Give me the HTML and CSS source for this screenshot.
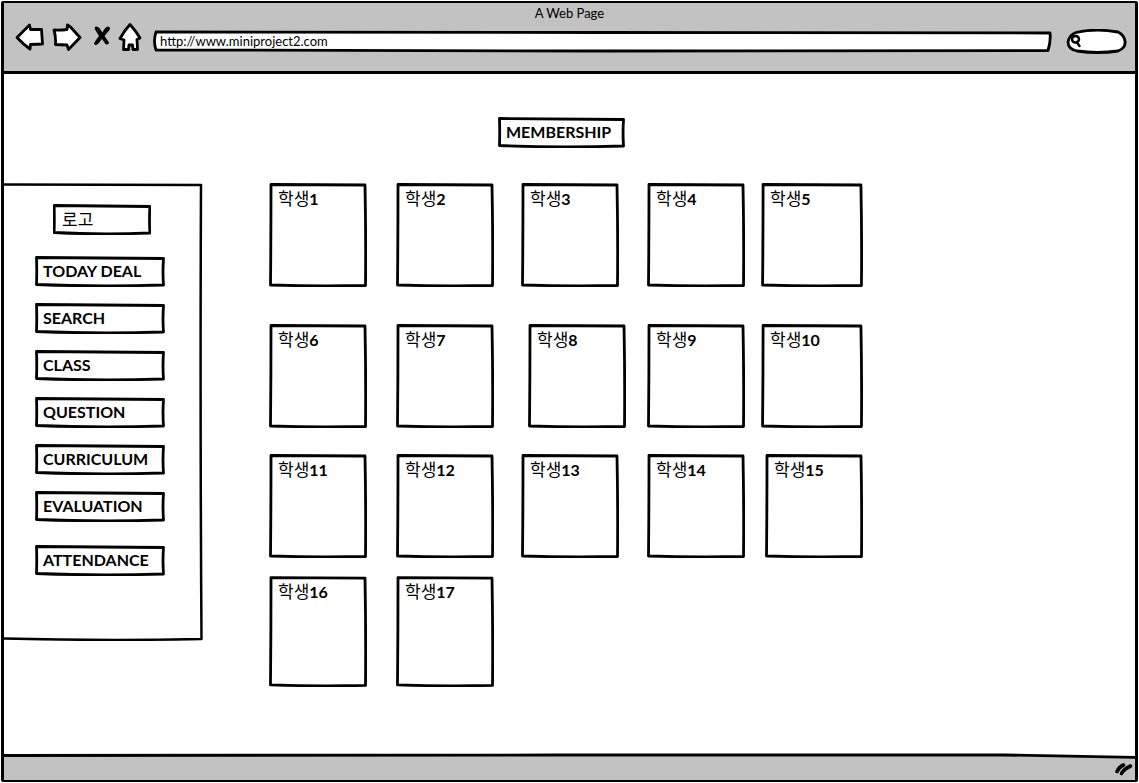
FILE: index.html
```html
<!DOCTYPE html>
<html lang="ko">
<head>
<meta charset="utf-8">
<meta name="viewport" content="width=device-width, initial-scale=1">
<title>A Web Page</title>
<link rel="stylesheet" href="styles.css">
</head>
<body>
<div class="window">
  <header class="chrome">
    <div class="window-title">A Web Page</div>
    <form class="toolbar">
      <button class="tool back" type="button" aria-label="Back">
        <svg width="30" height="28" viewBox="0 0 30 28"><path class="shape" d="M2 14.500L14.500 2l1 4.500L26.500 6.500q.5 7 1 14.500l-12 .5-.5 4.500Q8 21 2 14.500Z"/></svg>
      </button>
      <button class="tool forward" type="button" aria-label="Forward">
        <svg width="30" height="28" viewBox="0 0 30 28"><path class="shape" d="M2 7q6 .5 13-.5l.5-4.500 3 2L28 14.500 16.500 26.500 15 22 3.500 21.500q.5-8-1.500-14.500Z"/></svg>
      </button>
      <button class="tool stop" type="button" aria-label="Stop">
        <svg width="18" height="28" viewBox="0 0 18 28"><path class="cross" d="M2 6.500Q1 3.500 3.500 3.500 6 3.500 9.500 9.500 12 4 15 3.500 18 4 16.500 7L11.500 13 16 19.500Q15.500 22.500 12.500 21L9 16 5 21Q1.500 23 1 20.500 3 16.500 6 13Z"/></svg>
      </button>
      <button class="tool home" type="button" aria-label="Home">
        <svg width="24" height="28" viewBox="0 0 24 28"><path class="shape" d="M12 1.500Q18 8 22 15l-3 1.500.5 10H15l-.5-4.500h-3.500l-.5 4.500H5.500L6 17l-4-1.500Q6 8 12 1.500Z"/></svg>
      </button>
      <input class="address" type="text" aria-label="Address" value="http://www.miniproject2.com">
      <label class="search">
        <svg width="14" height="14" viewBox="0 0 14 14" aria-hidden="true"><path class="lens" d="M2 5Q2.500 2 5.500 2 9 2 9 5.500 8.500 8.500 5 8.500 2 8 2 5ZM7 8.500L9.500 12"/></svg>
        <input class="search-input" type="text" aria-label="Search">
      </label>
    </form>
  </header>

  <main class="page">
    <nav class="sidebar" aria-label="Menu">
      <a class="box logo hangul" href="#">로고</a>
      <a class="box item" href="#">TODAY DEAL</a>
      <a class="box item" href="#">SEARCH</a>
      <a class="box item" href="#">CLASS</a>
      <a class="box item" href="#">QUESTION</a>
      <a class="box item" href="#">CURRICULUM</a>
      <a class="box item" href="#">EVALUATION</a>
      <a class="box item last" href="#">ATTENDANCE</a>
    </nav>
    <section class="content">
      <h1 class="box heading">MEMBERSHIP</h1>
      <ul class="cards">
        <li class="card"><span class="hangul">학생</span>1</li>
        <li class="card"><span class="hangul">학생</span>2</li>
        <li class="card"><span class="hangul">학생</span>3</li>
        <li class="card"><span class="hangul">학생</span>4</li>
        <li class="card wide"><span class="hangul">학생</span>5</li>
        <li class="card"><span class="hangul">학생</span>6</li>
        <li class="card"><span class="hangul">학생</span>7</li>
        <li class="card shifted"><span class="hangul">학생</span>8</li>
        <li class="card"><span class="hangul">학생</span>9</li>
        <li class="card wide"><span class="hangul">학생</span>10</li>
        <li class="card"><span class="hangul">학생</span>11</li>
        <li class="card"><span class="hangul">학생</span>12</li>
        <li class="card"><span class="hangul">학생</span>13</li>
        <li class="card"><span class="hangul">학생</span>14</li>
        <li class="card end"><span class="hangul">학생</span>15</li>
        <li class="card tall"><span class="hangul">학생</span>16</li>
        <li class="card tall"><span class="hangul">학생</span>17</li>
      </ul>
    </section>
  </main>

  <footer class="statusbar">
    <svg width="20" height="16" viewBox="0 0 20 16" aria-hidden="true"><path class="grip" d="M3 10.500Q5 6 9.500 4M7.500 12.500Q10 8 16.500 5"/></svg>
  </footer>
</div>
</body>
</html>
```
FILE: styles.css
```css
* {
  box-sizing: border-box;
}

body {
  margin: 0;
  background: #fff;
  color: #000;
  font-family: Lato, "Noto Sans CJK KR", sans-serif;
  font-size: 16px;
  font-weight: 700;
}

.window {
  display: flex;
  flex-direction: column;
  min-height: calc(100vh - 2px);
  margin: 1px;
  border: solid #000;
  border-width: 2px 3px;
  border-radius: 2px;
}

/* Browser bar */
.chrome {
  height: 71px;
  background: #c2c2c2;
  border-bottom: 3px solid #000;
}

.window-title {
  font-size: 13px;
  font-weight: 400;
  line-height: 20px;
  text-align: center;
}

.toolbar {
  display: flex;
  align-items: center;
  height: 28px;
  padding: 0 8px 0 11px;
}

.tool {
  flex: none;
  padding: 0;
  border: 0;
  background: none;
  line-height: 0;
}

.forward {
  margin-left: 7px;
}

.stop {
  margin-left: 11px;
}

.home {
  margin-left: 7px;
}

.shape {
  fill: #fff;
  stroke: #000;
  stroke-width: 2.8;
  stroke-linejoin: round;
}

.cross {
  fill: #000;
}

.grip {
  fill: none;
  stroke: #000;
  stroke-width: 3.6;
  stroke-linecap: round;
}

.lens {
  fill: none;
  stroke: #000;
  stroke-width: 2.4;
  stroke-linecap: round;
}

.address {
  flex: 1;
  min-width: 0;
  height: 23px;
  margin: 8px 14px 0 11px;
  padding: 0 7px;
  border: 0;
  background: url("data:image/svg+xml,%3Csvg xmlns='http://www.w3.org/2000/svg' viewBox='0 0 898 23' preserveAspectRatio='none'%3E%3Cpath d='M3 2L450 2.500 896 3Q897 11 894 20.500L450 21 3 20Q0 11 3 2Z' fill='%23fff' stroke='%23000' stroke-width='2.800' stroke-linejoin='round' vector-effect='non-scaling-stroke'/%3E%3C/svg%3E") 0 0 / 100% 100% no-repeat;
  color: #000;
  font: 400 13px Lato, sans-serif;
}

.search {
  display: flex;
  align-items: center;
  width: 61px;
  height: 25px;
  margin-top: 8px;
  padding: 0 4px;
  background: url("data:image/svg+xml,%3Csvg xmlns='http://www.w3.org/2000/svg' viewBox='0 0 61 25' preserveAspectRatio='none'%3E%3Cpath d='M10 3.500Q30 -1 52 3 58 6 59 12 60 19 52 22 32 25 11 22 2 20 2 13 3 6 10 3.500Z' fill='%23fff' stroke='%23000' stroke-width='2.800' vector-effect='non-scaling-stroke'/%3E%3C/svg%3E") 0 0 / 100% 100% no-repeat;
}

.search svg {
  flex: none;
}

.search-input {
  width: 100%;
  min-width: 0;
  padding: 0;
  border: 0;
  outline: 0;
  background: none;
}

/* Page */
.page {
  display: flex;
  flex: 1;
  align-items: flex-start;
}

.box {
  display: block;
  height: 31px;
  margin: 0;
  padding: 0 8px;
  background: url("data:image/svg+xml,%3Csvg xmlns='http://www.w3.org/2000/svg' viewBox='0 0 130 31' preserveAspectRatio='none'%3E%3Cpath d='M1.500 1.500Q66 2 128.500 2.500Q127.500 16 128.500 29Q64 31 1.500 28.500Q2 15 1.500 1.500Z' fill='%23fff' stroke='%23000' stroke-width='2.800' stroke-linejoin='round' vector-effect='non-scaling-stroke'/%3E%3C/svg%3E") 0 0 / 100% 100% no-repeat;
  color: #000;
  font-size: 16px;
  line-height: 30px;
  text-decoration: none;
  white-space: nowrap;
}

.hangul {
  font-family: "Noto Sans CJK KR", sans-serif;
  font-size: 17px;
  font-weight: 400;
}

.sidebar {
  display: flex;
  flex: none;
  flex-direction: column;
  align-items: center;
  gap: 16px;
  width: 199px;
  height: 458px;
  margin-top: 109px;
  padding: 21px 7px 0 0;
  background: url("data:image/svg+xml,%3Csvg xmlns='http://www.w3.org/2000/svg' viewBox='0 0 199 458' preserveAspectRatio='none'%3E%3Cpath d='M0 1.500L197 2Q196 230 197.500 456Q100 458 0 455.500' fill='none' stroke='%23000' stroke-width='2.500' stroke-linejoin='round' vector-effect='non-scaling-stroke'/%3E%3C/svg%3E") 0 0 / 100% 100% no-repeat;
}

.logo {
  width: 98px;
  margin: 0 0 5px 4px;
  padding: 0 9px;
}

.item {
  width: 130px;
}

.last {
  margin-top: 7px;
}

.content {
  flex: 1;
  padding: 43px 0 0 66px;
}

.heading {
  width: 127px;
  margin: 0 0 35px 229px;
}

.cards {
  display: grid;
  grid-template-columns: 127px 125px 126px 114px 102px;
  grid-template-rows: 141px 130px 122px 111px;
  margin: 0;
  padding: 0;
  list-style: none;
}

.card {
  width: 98px;
  height: 104px;
  padding: 5px 9px;
  background: url("data:image/svg+xml,%3Csvg xmlns='http://www.w3.org/2000/svg' viewBox='0 0 98 104' preserveAspectRatio='none'%3E%3Cpath d='M2 1.500L96 2Q97 52 96.500 102.500Q48 103.500 1.500 102Q2 52 2 1.500Z' fill='%23fff' stroke='%23000' stroke-width='2.800' stroke-linejoin='round' vector-effect='non-scaling-stroke'/%3E%3C/svg%3E") 0 0 / 100% 100% no-repeat;
  line-height: 20px;
}

.card .hangul {
  line-height: 20px;
}

.wide {
  width: 102px;
}

.shifted {
  margin-left: 7px;
}

.end {
  margin-left: 4px;
}

.tall {
  height: 111px;
}

/* Bottom bar */
.statusbar {
  display: flex;
  align-items: center;
  justify-content: flex-end;
  height: 27px;
  padding: 5px 1px 0 0;
  background: url("data:image/svg+xml,%3Csvg xmlns='http://www.w3.org/2000/svg' viewBox='0 0 1131 27' preserveAspectRatio='none'%3E%3Cpath d='M-5 2.500L550 2 1000 2 1136 4.500V32H-5Z' fill='%23c2c2c2' stroke='%23000' stroke-width='2.800' vector-effect='non-scaling-stroke'/%3E%3C/svg%3E") 0 0 / 100% 100% no-repeat;
}
```
